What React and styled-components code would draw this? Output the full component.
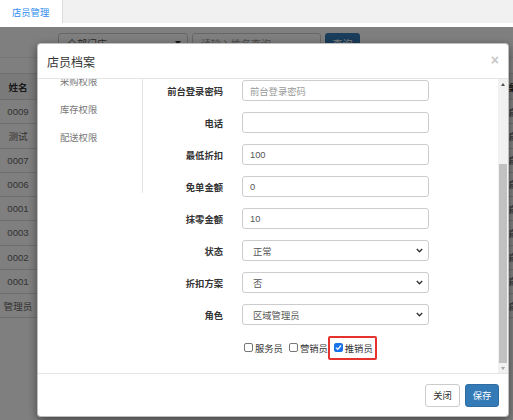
import React from 'react';
import styled, { createGlobalStyle } from 'styled-components';

const Global = createGlobalStyle`
  html, body { margin: 0; padding: 0; background: #fff; }
  body { font-family: "Liberation Sans", "Noto Sans CJK SC", sans-serif; }
  * { box-sizing: border-box; }
`;

const Page = styled.div`
  width: 513px;
  height: 420px;
  overflow: hidden;
  display: flex;
  flex-direction: column;
`;

const TabBar = styled.div`
  height: 23px;
  flex-shrink: 0;
  background: #f1f1f1;
  display: flex;
`;

const Tab = styled.div`
  width: 63px;
  background: #fff;
  border-right: 1px solid #dcdcdc;
  color: #2d8cf0;
  font-size: 9.3px;
  display: flex;
  align-items: center;
  padding-left: 12px;
`;

const TabGap = styled.div`
  height: 4px;
  flex-shrink: 0;
  background: #fff;
`;

const Frame = styled.div`
  flex: 1;
  position: relative;
  background: #fff;
`;

const Toolbar = styled.div`
  display: flex;
  gap: 4px;
  padding: 6px 0 0 58px;
  height: 31px;
  border-bottom: 1px solid #eee;
`;

const FakeSelect = styled.div`
  width: ${p => p.$w}px;
  height: 21px;
  border: 1px solid #ccc;
  border-radius: 3px;
  display: flex;
  align-items: center;
  justify-content: space-between;
  padding: 0 6px 0 8px;
  font-size: 10px;
  color: ${p => (p.$placeholder ? '#999' : '#555')};
`;

const Caret = styled.span`
  width: 0;
  height: 0;
  border-left: 3px solid transparent;
  border-right: 3px solid transparent;
  border-top: 4px solid #333;
  margin-top: -2px;
`;

const SearchButton = styled.div`
  width: 35px;
  height: 21px;
  border-radius: 3px;
  background: #337ab7;
  color: #fff;
  font-size: 10px;
  display: flex;
  align-items: center;
  justify-content: center;
`;

const Table = styled.div`
  margin-top: 15px;
  display: grid;
  grid-template-columns: 36px 1fr 22px;
`;

const Cell = styled.div`
  height: ${p => (p.$head ? '27px' : '24.25px')};
  border-bottom: 1px solid #ddd;
  background: ${p => (p.$head ? '#f5f5f5' : '#fff')};
  border-top: ${p => (p.$first ? '1px solid #ddd' : 'none')};
  font-size: 9.6px;
  font-weight: ${p => (p.$head ? 'bold' : 'normal')};
  color: ${p => (p.$head ? '#333' : '#666')};
  display: flex;
  align-items: center;
  justify-content: ${p => (p.$left ? 'flex-start' : 'center')};
  padding-left: ${p => (p.$left ? '15px' : '0')};
  white-space: nowrap;
  overflow: hidden;
`;

const Backdrop = styled.div`
  position: absolute;
  inset: 0;
  background: rgba(0, 0, 0, 0.5);
  z-index: 1;
`;

const Modal = styled.div`
  position: absolute;
  left: 37px;
  top: 16px;
  width: 472px;
  height: 374px;
  background: #fff;
  border: 1px solid rgba(0, 0, 0, 0.25);
  border-radius: 4px;
  box-shadow: 0 3px 10px rgba(0, 0, 0, 0.45);
  z-index: 2;
  display: flex;
  flex-direction: column;
  overflow: hidden;
`;

const ModalHeader = styled.div`
  height: 35px;
  flex-shrink: 0;
  border-bottom: 1px solid #e5e5e5;
  display: flex;
  align-items: center;
  justify-content: space-between;
  padding: 0 9px 0 9px;
`;

const Title = styled.div`
  font-size: 12px;
  color: #333;
  padding-top: 1px;
`;

const Close = styled.div`
  font-size: 14px;
  font-weight: bold;
  color: #c8c8c8;
  line-height: 1;
  margin-top: -3px;
`;

const ModalBody = styled.div`
  height: 294px;
  flex-shrink: 0;
  display: flex;
`;

const Viewport = styled.div`
  flex: 1;
  overflow: hidden;
  display: flex;
  align-items: flex-start;
`;

const Sidebar = styled.div`
  width: 105px;
  height: 125px;
  margin-top: -11px;
  flex-shrink: 0;
  border-right: 1px solid #e3e3e3;
`;

const SideItem = styled.div`
  height: 28px;
  line-height: 28px;
  padding-left: 22px;
  font-size: 9.3px;
  color: #777;
`;

const Form = styled.div`
  display: grid;
  grid-template-columns: 80px 187px;
  column-gap: 19px;
  row-gap: 11px;
  padding: 1px 0 18px;
`;

const Label = styled.div`
  font-size: 9.3px;
  font-weight: bold;
  color: #333;
  text-align: right;
  align-self: center;
`;

const Field = styled.div`
  height: 21px;
  border: 1px solid #ccc;
  border-radius: 3px;
  display: flex;
  align-items: center;
  justify-content: space-between;
  padding: 0 5px 0 ${p => (p.$select ? '10px' : '7px')};
  font-size: 9.3px;
  color: ${p => (p.$placeholder ? '#999' : '#555')};
  background: #fff;
`;

const Chevron = () => (
  <svg width="7" height="5" viewBox="0 0 7 5">
    <path d="M0.8 1 L3.5 3.7 L6.2 1" fill="none" stroke="#333" strokeWidth="1.4" />
  </svg>
);

const CheckRow = styled.div`
  grid-column: 2;
  height: 21px;
  margin-top: 1px;
  display: flex;
  align-items: center;
  gap: 6px;
  padding-left: 2px;
`;

const CheckItem = styled.label`
  position: relative;
  display: flex;
  align-items: center;
  gap: 2px;
  height: 12px;
  font-size: 9.3px;
  color: #333;
  ${p =>
    p.$highlight &&
    `
    &::after {
      content: "";
      position: absolute;
      left: -6px;
      right: -4px;
      top: -6px;
      bottom: -6px;
      border: 2px solid #e5322d;
      border-radius: 2px;
    }
  `}
`;

const Box = styled.span`
  width: 9px;
  height: 9px;
  border-radius: 2px;
  border: 1px solid ${p => (p.$checked ? '#1a73e8' : '#767676')};
  background: ${p => (p.$checked ? '#1a73e8' : '#fff')};
  display: flex;
  align-items: center;
  justify-content: center;
`;

const Tick = () => (
  <svg width="7" height="7" viewBox="0 0 7 7">
    <path d="M1 3.6 L2.8 5.3 L6 1.5" fill="none" stroke="#fff" strokeWidth="1.3" />
  </svg>
);

const Scrollbar = styled.div`
  width: 10px;
  flex-shrink: 0;
  background: #f1f1f1;
  display: flex;
  flex-direction: column;
`;

const ArrowButton = styled.div`
  height: 10px;
  display: flex;
  align-items: center;
  justify-content: center;
  &::before {
    content: "";
    width: 0;
    height: 0;
    border-left: 2.5px solid transparent;
    border-right: 2.5px solid transparent;
    ${p =>
      p.$down
        ? 'border-top: 3px solid #a3a3a3;'
        : 'border-bottom: 3px solid #505050;'}
  }
`;

const Track = styled.div`
  flex: 1;
  display: flex;
  flex-direction: column;
  justify-content: flex-end;
`;

const Thumb = styled.div`
  height: 199px;
  margin: 0 1px;
  background: #c1c1c1;
`;

const ModalFooter = styled.div`
  flex: 1;
  border-top: 1px solid #e5e5e5;
  display: flex;
  align-items: center;
  justify-content: flex-end;
  gap: 5px;
  padding: 0 9px 0 0;
`;

const Button = styled.div`
  width: ${p => p.$w}px;
  height: 23px;
  border-radius: 3px;
  border: 1px solid ${p => (p.$primary ? '#2e6da4' : '#ccc')};
  background: ${p => (p.$primary ? '#337ab7' : '#fff')};
  color: ${p => (p.$primary ? '#fff' : '#333')};
  font-size: 9.3px;
  display: flex;
  align-items: center;
  justify-content: center;
`;

const rows = ['0009', '测试', '0007', '0006', '0001', '0003', '0002', '0001', '管理员'];
const sideItems = ['采购权限', '库存权限', '配送权限'];
const fields = [
  { label: '前台登录密码', value: '前台登录密码', placeholder: true },
  { label: '电话', value: '' },
  { label: '最低折扣', value: '100' },
  { label: '免单金额', value: '0' },
  { label: '抹零金额', value: '10' },
  { label: '状态', value: '正常', select: true },
  { label: '折扣方案', value: '否', select: true },
  { label: '角色', value: '区域管理员', select: true },
];
const checks = [
  { text: '服务员' },
  { text: '营销员' },
  { text: '推销员', checked: true, highlight: true },
];

export default function App() {
  return (
    <>
      <Global />
      <Page>
        <TabBar>
          <Tab>店员管理</Tab>
        </TabBar>
        <TabGap />
        <Frame>
          <Toolbar>
            <FakeSelect $w={130}>
              全部门店
              <Caret />
            </FakeSelect>
            <FakeSelect $w={129} $placeholder>
              请输入姓名查询
            </FakeSelect>
            <SearchButton>查询</SearchButton>
          </Toolbar>
          <Table>
            <Cell $head $first>姓名</Cell>
            <Cell $head $first />
            <Cell $head $first $left>操作</Cell>
            {rows.map((r, i) => (
              <React.Fragment key={i}>
                <Cell>{r}</Cell>
                <Cell />
                <Cell $left>编辑</Cell>
              </React.Fragment>
            ))}
          </Table>
          <Backdrop />
          <Modal>
            <ModalHeader>
              <Title>店员档案</Title>
              <Close>×</Close>
            </ModalHeader>
            <ModalBody>
              <Viewport>
                <Sidebar>
                  {sideItems.map(s => (
                    <SideItem key={s}>{s}</SideItem>
                  ))}
                </Sidebar>
                <Form>
                  {fields.map(f => (
                    <React.Fragment key={f.label}>
                      <Label>{f.label}</Label>
                      <Field $select={f.select} $placeholder={f.placeholder}>
                        <span>{f.value}</span>
                        {f.select && <Chevron />}
                      </Field>
                    </React.Fragment>
                  ))}
                  <CheckRow>
                    {checks.map(c => (
                      <CheckItem key={c.text} $highlight={c.highlight}>
                        <Box $checked={c.checked}>{c.checked && <Tick />}</Box>
                        {c.text}
                      </CheckItem>
                    ))}
                  </CheckRow>
                </Form>
              </Viewport>
              <Scrollbar>
                <ArrowButton />
                <Track>
                  <Thumb />
                </Track>
                <ArrowButton $down />
              </Scrollbar>
            </ModalBody>
            <ModalFooter>
              <Button $w={35}>关闭</Button>
              <Button $w={34} $primary>保存</Button>
            </ModalFooter>
          </Modal>
        </Frame>
      </Page>
    </>
  );
}
